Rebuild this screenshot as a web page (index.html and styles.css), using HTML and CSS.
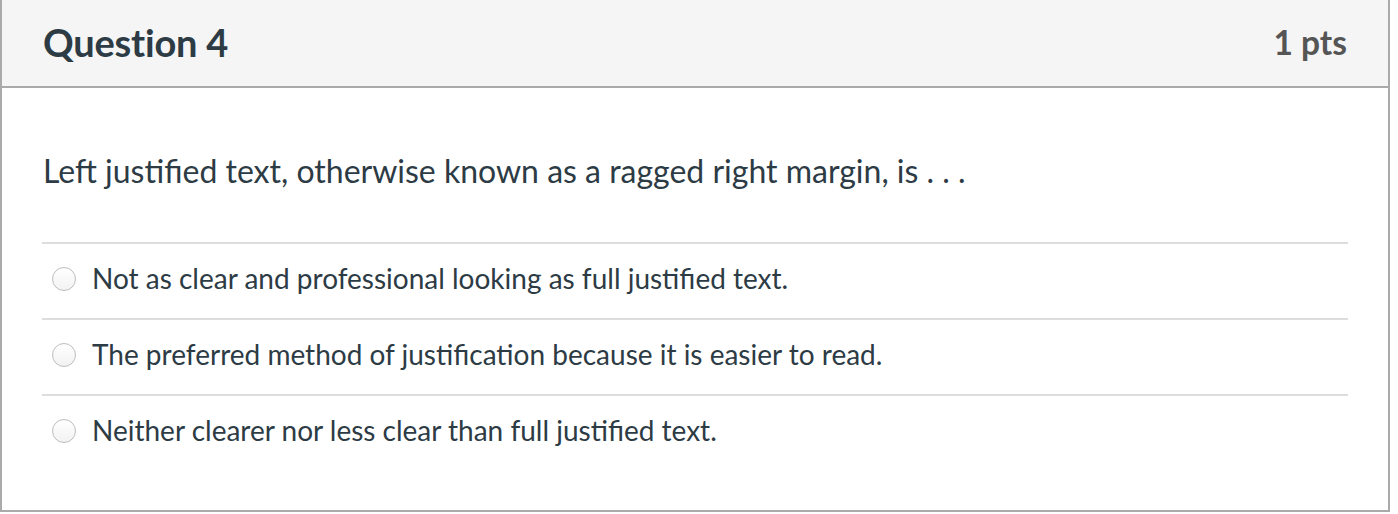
FILE: index.html
```html
<!DOCTYPE html>
<html>
<head>
<meta charset="utf-8">
<link rel="stylesheet" href="styles.css">
</head>
<body>
<div class="card">
  <div class="header">
    <h2 class="title">Question 4</h2>
    <span class="pts">1 pts</span>
  </div>
  <div class="content">
    <p class="question">Left justified text, otherwise known as a ragged right margin, is . . .</p>
    <div class="answers">
      <label class="answer"><span class="radio"></span><span class="label">Not as clear and professional looking as full justified text.</span></label>
      <label class="answer"><span class="radio"></span><span class="label">The preferred method of justification because it is easier to read.</span></label>
      <label class="answer"><span class="radio"></span><span class="label">Neither clearer nor less clear than full justified text.</span></label>
    </div>
  </div>
</div>
</body>
</html>
```

FILE: styles.css
```css
html, body {
  margin: 0;
  padding: 0;
  background: #ffffff;
}
body {
  font-family: Lato, "Open Sans", sans-serif;
  color: #2d3b45;
}
.card {
  width: 1390px;
  box-sizing: border-box;
  border: 2px solid #aaaaaa;
  border-top: none;
}
.header {
  box-sizing: border-box;
  background: #f5f5f5;
  border-bottom: 2px solid #aaaaaa;
  display: flex;
  align-items: center;
  justify-content: space-between;
  padding: 0 41px 2px 41px;
  height: 88px;
}
.title {
  margin: 0;
  font-size: 38px;
  font-weight: 700;
  line-height: 44px;
  color: #2d3b45;
  letter-spacing: -0.2px;
}
.pts {
  font-size: 33.5px;
  font-weight: 700;
  line-height: 40px;
  color: #555555;
}
.content {
  padding: 0 40px 40px 40px;
}
.question {
  margin: 0;
  padding: 63px 1px 51px 1px;
  font-size: 32px;
  line-height: 40px;
}
.answer {
  display: flex;
  align-items: center;
  height: 76px;
  box-sizing: border-box;
  border-top: 2px solid #dddddd;
  padding: 0 0 4px 10px;
  gap: 16px;
}
.radio {
  width: 24px;
  height: 24px;
  box-sizing: border-box;
  border-radius: 50%;
  border: 1px solid #bdbdbd;
  background: linear-gradient(#ffffff, #f2f2f2);
  flex: none;
}
.label {
  font-size: 28px;
  line-height: 34px;
  margin-bottom: 2px;
}
```
